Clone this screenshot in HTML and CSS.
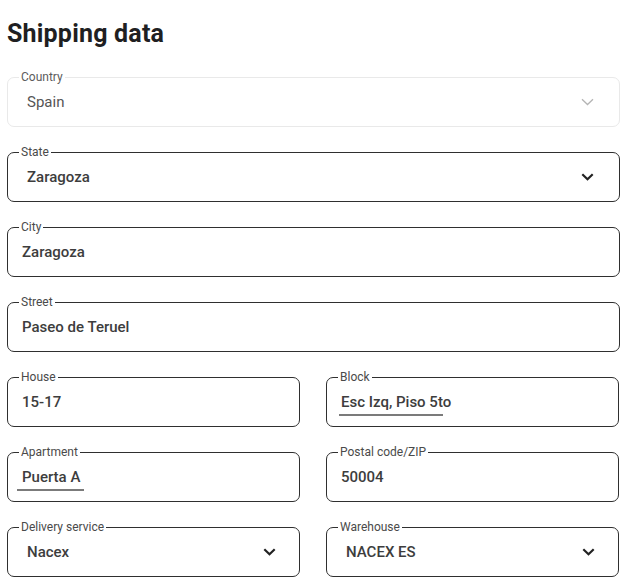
FILE: index.html
```html
<!DOCTYPE html>
<html lang="en">
<head>
<meta charset="utf-8">
<title>Shipping data</title>
<link rel="stylesheet" href="styles.css">
</head>
<body>
<main class="page">
  <h1 class="title">Shipping data</h1>
  <form class="form">
    <fieldset class="field field-full field-disabled field-select">
      <legend class="field-label">Country</legend>
      <div class="field-row">
        <span class="field-value">Spain</span>
        <svg class="chevron" width="13" height="8" viewBox="0 0 13 8"><path d="M1 1.2l5.5 5.3 5.5-5.3" fill="none" stroke="#b4b4b4" stroke-width="1.3"/></svg>
      </div>
    </fieldset>

    <fieldset class="field field-full field-select">
      <legend class="field-label">State</legend>
      <div class="field-row">
        <span class="field-value">Zaragoza</span>
        <svg class="chevron" width="13" height="8" viewBox="0 0 13 8"><path d="M1.3 1.3l5.2 4.9 5.2-4.9" fill="none" stroke="#222" stroke-width="2.2"/></svg>
      </div>
    </fieldset>

    <fieldset class="field field-full">
      <legend class="field-label">City</legend>
      <div class="field-row"><span class="field-value">Zaragoza</span></div>
    </fieldset>

    <fieldset class="field field-full">
      <legend class="field-label">Street</legend>
      <div class="field-row"><span class="field-value">Paseo de Teruel</span></div>
    </fieldset>

    <fieldset class="field">
      <legend class="field-label">House</legend>
      <div class="field-row"><span class="field-value">15-17</span></div>
    </fieldset>

    <fieldset class="field">
      <legend class="field-label">Block</legend>
      <div class="field-row"><span class="field-value underlined underline-block">Esc Izq, Piso 5to</span></div>
    </fieldset>

    <fieldset class="field">
      <legend class="field-label">Apartment</legend>
      <div class="field-row"><span class="field-value underlined underline-apt">Puerta A</span></div>
    </fieldset>

    <fieldset class="field">
      <legend class="field-label">Postal code/ZIP</legend>
      <div class="field-row"><span class="field-value">50004</span></div>
    </fieldset>

    <fieldset class="field field-select field-half-select">
      <legend class="field-label">Delivery service</legend>
      <div class="field-row">
        <span class="field-value">Nacex</span>
        <svg class="chevron" width="13" height="8" viewBox="0 0 13 8"><path d="M1.3 1.3l5.2 4.9 5.2-4.9" fill="none" stroke="#222" stroke-width="2.2"/></svg>
      </div>
    </fieldset>

    <fieldset class="field field-select field-half-select">
      <legend class="field-label">Warehouse</legend>
      <div class="field-row">
        <span class="field-value">NACEX ES</span>
        <svg class="chevron" width="13" height="8" viewBox="0 0 13 8"><path d="M1.3 1.3l5.2 4.9 5.2-4.9" fill="none" stroke="#222" stroke-width="2.2"/></svg>
      </div>
    </fieldset>
  </form>
</main>
</body>
</html>
```

FILE: styles.css
```css
* { box-sizing: border-box; }

html, body {
  margin: 0;
  background: #ffffff;
}

body {
  font-family: Roboto, "Liberation Sans", Arial, sans-serif;
  color: #333;
}

.page {
  padding: 19px 0 0 7px;
  width: 633px;
}

.title {
  margin: 0 0 22px 0;
  font-size: 25px;
  line-height: 29px;
  font-weight: 700;
  color: #1f1f22;
  letter-spacing: 0.2px;
}

.form {
  display: grid;
  grid-template-columns: 293px 293px;
  column-gap: 26px;
  row-gap: 18px;
}

.field {
  margin: 0;
  min-width: 0;
  border: 1px solid #2f2f2f;
  border-radius: 7px;
  padding: 8px 24px 14px 14px;
}

.field-full {
  grid-column: 1 / span 2;
  width: 613px;
}

.field-select {
  padding-left: 19px;
  padding-right: 25px;
}

.field-half-select {
  padding-right: 23px;
}

.field-disabled {
  border-color: #e9e9e9;
}

.field-label {
  margin-left: -3px;
  padding: 0 2px;
  font-size: 12px;
  line-height: 14px;
  color: #4a4a4a;
}

.field-select .field-label {
  margin-left: -8px;
}

.field-disabled .field-label {
  color: #5c5c5c;
}

.field-row {
  display: flex;
  align-items: center;
  justify-content: space-between;
  height: 20px;
}

.field-value {
  font-size: 15px;
  line-height: 20px;
  font-weight: 500;
  color: #3d3d3d;
}

.field-disabled .field-value {
  font-weight: 400;
  color: #555;
}

.underlined {
  position: relative;
}

.underlined::after {
  content: "";
  position: absolute;
  top: 22px;
  height: 2px;
  background: #7b7b7b;
}

.underline-apt::after {
  left: -5px;
  width: 67px;
}

.underline-block::after {
  left: -2px;
  width: 104px;
}

.chevron {
  display: block;
  flex: none;
}
```
